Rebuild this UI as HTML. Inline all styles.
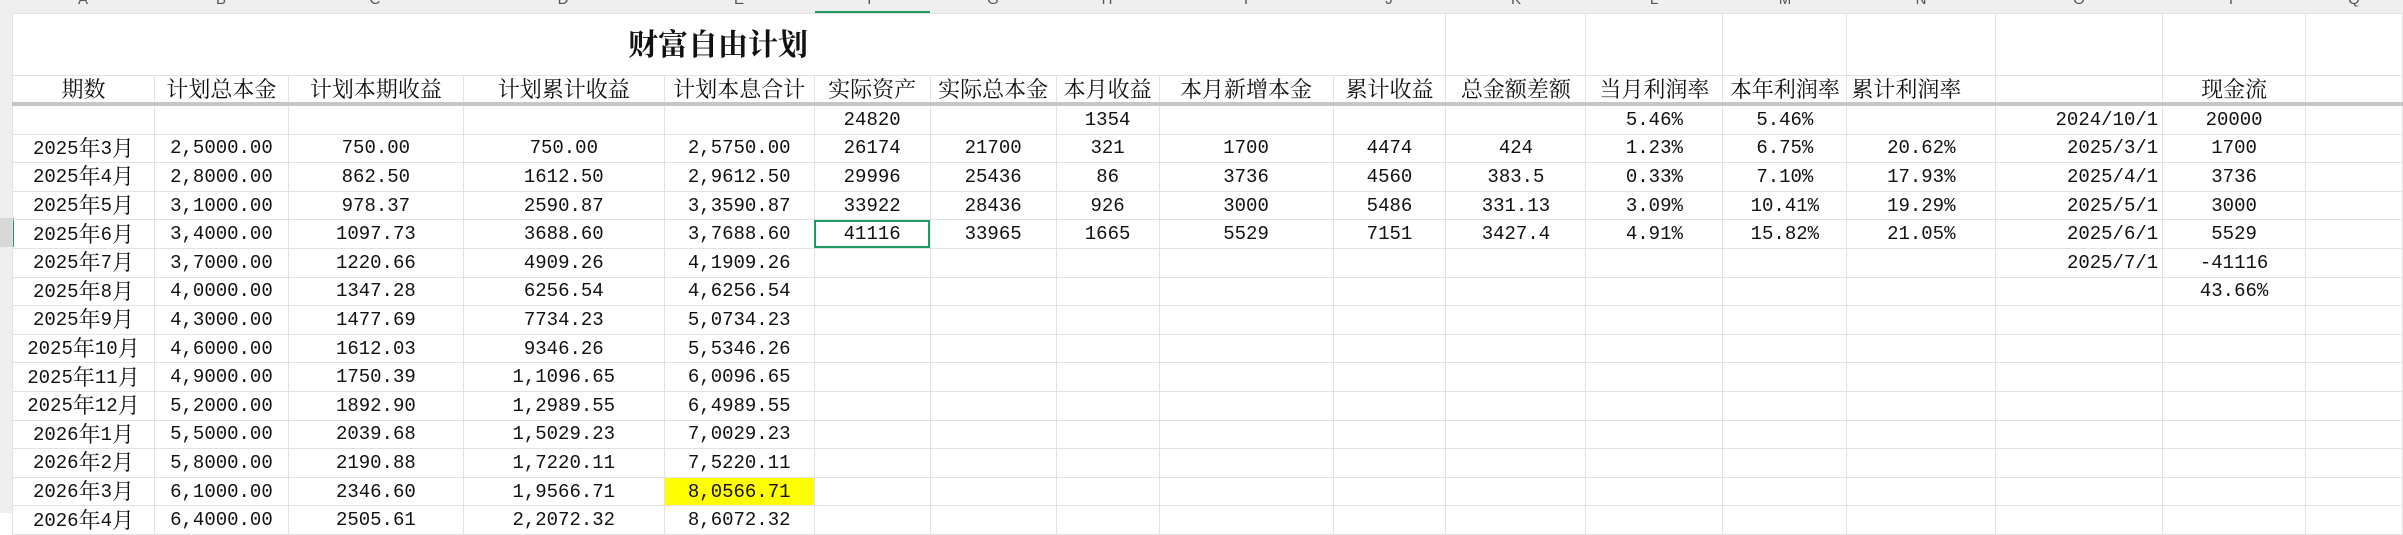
<!DOCTYPE html>
<html><head><meta charset="utf-8">
<style>
body{margin:0;width:2403px;height:513px;overflow:hidden;background:#fff;position:relative;font-family:"Liberation Mono","Noto Serif CJK SC",serif;color:#111}
.colbar{position:absolute;left:0;top:0;width:2403px;height:13px;background:#efefef;border-bottom:1px solid #d4d4d4;overflow:hidden}
.colbar span{position:absolute;top:-9px;font:15px "Liberation Sans",sans-serif;color:#555;transform:translateX(-50%)}
.rowbar{position:absolute;left:0;top:13px;width:12px;height:500px;background:#efefef;border-right:1px solid #d4d4d4}
table{position:absolute;left:12px;top:13px;border-collapse:collapse;table-layout:fixed}
td{border:1px solid #e2e2e2;padding:0;text-align:center;vertical-align:middle;white-space:nowrap;overflow:hidden;font-size:19px;height:28.6px;line-height:20px;box-sizing:border-box}
.h td{font-family:"Noto Serif CJK SC",serif;font-size:22px;line-height:20px;overflow:visible}
.c{font-family:"Noto Serif CJK SC",serif;font-size:22px;line-height:20px;vertical-align:-2px}
.r{text-align:right;padding-right:4px}
.b td{border-top:4px solid #c6c6c6}
.title{position:absolute;left:628px;top:22px;font-family:"Noto Serif CJK SC",serif;font-weight:bold;font-size:30px;line-height:40px}
</style></head><body>
<div class="colbar">
<span style="left:83px">A</span><span style="left:221px">B</span><span style="left:375px">C</span><span style="left:563px">D</span><span style="left:739px">E</span><span style="left:872px">F</span><span style="left:993px">G</span><span style="left:1107px">H</span><span style="left:1246px">I</span><span style="left:1389px">J</span><span style="left:1516px">K</span><span style="left:1654px">L</span><span style="left:1785px">M</span><span style="left:1921px">N</span><span style="left:2079px">O</span><span style="left:2234px">P</span><span style="left:2354px">Q</span>
</div>
<div style="position:absolute;left:815px;top:11px;width:115px;height:2px;background:#1e9b62"></div>
<div class="rowbar"></div>
<div style="position:absolute;left:0;top:218px;width:12px;height:29px;background:#d8d8d8;border-right:2px solid #1e9b62"></div>
<table>
<colgroup><col style="width:142px"><col style="width:134px"><col style="width:175px"><col style="width:201px"><col style="width:150px"><col style="width:116px"><col style="width:126px"><col style="width:103px"><col style="width:174px"><col style="width:113px"><col style="width:140px"><col style="width:137px"><col style="width:124px"><col style="width:149px"><col style="width:167px"><col style="width:143px"><col style="width:97px"></colgroup>
<tr><td colspan="10" style="height:62px"></td><td style="height:62px"></td><td></td><td></td><td></td><td></td><td></td><td></td></tr>
<tr class="h"><td style="height:28px">期数</td><td>计划总本金</td><td>计划本期收益</td><td>计划累计收益</td><td>计划本息合计</td><td>实际资产</td><td>实际总本金</td><td>本月收益</td><td>本月新增本金</td><td>累计收益</td><td>总金额差额</td><td>当月利润率</td><td>本年利润率</td><td style="text-align:left;padding-left:4px">累计利润率</td><td></td><td>现金流</td><td></td></tr>
<tr class="b"><td style="height:30px"></td><td></td><td></td><td></td><td></td><td>24820</td><td></td><td>1354</td><td></td><td></td><td></td><td>5.46%</td><td>5.46%</td><td></td><td class="r">2024/10/1</td><td>20000</td><td></td></tr>
<tr><td>2025<span class="c">年</span>3<span class="c">月</span></td><td>2,5000.00</td><td>750.00</td><td>750.00</td><td>2,5750.00</td><td>26174</td><td>21700</td><td>321</td><td>1700</td><td>4474</td><td>424</td><td>1.23%</td><td>6.75%</td><td>20.62%</td><td class="r">2025/3/1</td><td>1700</td><td></td></tr>
<tr><td>2025<span class="c">年</span>4<span class="c">月</span></td><td>2,8000.00</td><td>862.50</td><td>1612.50</td><td>2,9612.50</td><td>29996</td><td>25436</td><td>86</td><td>3736</td><td>4560</td><td>383.5</td><td>0.33%</td><td>7.10%</td><td>17.93%</td><td class="r">2025/4/1</td><td>3736</td><td></td></tr>
<tr><td>2025<span class="c">年</span>5<span class="c">月</span></td><td>3,1000.00</td><td>978.37</td><td>2590.87</td><td>3,3590.87</td><td>33922</td><td>28436</td><td>926</td><td>3000</td><td>5486</td><td>331.13</td><td>3.09%</td><td>10.41%</td><td>19.29%</td><td class="r">2025/5/1</td><td>3000</td><td></td></tr>
<tr><td>2025<span class="c">年</span>6<span class="c">月</span></td><td>3,4000.00</td><td>1097.73</td><td>3688.60</td><td>3,7688.60</td><td style="outline:2px solid #1e9b62;outline-offset:-2px">41116</td><td>33965</td><td>1665</td><td>5529</td><td>7151</td><td>3427.4</td><td>4.91%</td><td>15.82%</td><td>21.05%</td><td class="r">2025/6/1</td><td>5529</td><td></td></tr>
<tr><td>2025<span class="c">年</span>7<span class="c">月</span></td><td>3,7000.00</td><td>1220.66</td><td>4909.26</td><td>4,1909.26</td><td></td><td></td><td></td><td></td><td></td><td></td><td></td><td></td><td></td><td class="r">2025/7/1</td><td>-41116</td><td></td></tr>
<tr><td>2025<span class="c">年</span>8<span class="c">月</span></td><td>4,0000.00</td><td>1347.28</td><td>6256.54</td><td>4,6256.54</td><td></td><td></td><td></td><td></td><td></td><td></td><td></td><td></td><td></td><td></td><td>43.66%</td><td></td></tr>
<tr><td>2025<span class="c">年</span>9<span class="c">月</span></td><td>4,3000.00</td><td>1477.69</td><td>7734.23</td><td>5,0734.23</td><td></td><td></td><td></td><td></td><td></td><td></td><td></td><td></td><td></td><td></td><td></td><td></td></tr>
<tr><td>2025<span class="c">年</span>10<span class="c">月</span></td><td>4,6000.00</td><td>1612.03</td><td>9346.26</td><td>5,5346.26</td><td></td><td></td><td></td><td></td><td></td><td></td><td></td><td></td><td></td><td></td><td></td><td></td></tr>
<tr><td>2025<span class="c">年</span>11<span class="c">月</span></td><td>4,9000.00</td><td>1750.39</td><td>1,1096.65</td><td>6,0096.65</td><td></td><td></td><td></td><td></td><td></td><td></td><td></td><td></td><td></td><td></td><td></td><td></td></tr>
<tr><td>2025<span class="c">年</span>12<span class="c">月</span></td><td>5,2000.00</td><td>1892.90</td><td>1,2989.55</td><td>6,4989.55</td><td></td><td></td><td></td><td></td><td></td><td></td><td></td><td></td><td></td><td></td><td></td><td></td></tr>
<tr><td>2026<span class="c">年</span>1<span class="c">月</span></td><td>5,5000.00</td><td>2039.68</td><td>1,5029.23</td><td>7,0029.23</td><td></td><td></td><td></td><td></td><td></td><td></td><td></td><td></td><td></td><td></td><td></td><td></td></tr>
<tr><td>2026<span class="c">年</span>2<span class="c">月</span></td><td>5,8000.00</td><td>2190.88</td><td>1,7220.11</td><td>7,5220.11</td><td></td><td></td><td></td><td></td><td></td><td></td><td></td><td></td><td></td><td></td><td></td><td></td></tr>
<tr><td>2026<span class="c">年</span>3<span class="c">月</span></td><td>6,1000.00</td><td>2346.60</td><td>1,9566.71</td><td style="background:#ffff00">8,0566.71</td><td></td><td></td><td></td><td></td><td></td><td></td><td></td><td></td><td></td><td></td><td></td><td></td></tr>
<tr><td>2026<span class="c">年</span>4<span class="c">月</span></td><td>6,4000.00</td><td>2505.61</td><td>2,2072.32</td><td>8,6072.32</td><td></td><td></td><td></td><td></td><td></td><td></td><td></td><td></td><td></td><td></td><td></td><td></td></tr>
</table>
<div class="title">财富自由计划</div>
</body></html>
